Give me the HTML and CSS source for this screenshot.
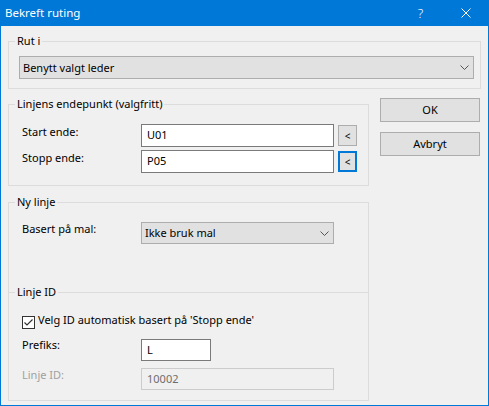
FILE: index.html
```html
<!DOCTYPE html>
<html>
<head>
<meta charset="utf-8">
<title>Bekreft ruting</title>
<link rel="stylesheet" href="styles.css">
</head>
<body>
<div class="window">
  <div class="titlebar">
    <span class="title">Bekreft ruting</span>
    <span class="tbtn help">?</span>
    <span class="tbtn close"><svg width="10" height="10" viewBox="0 0 10 10"><path d="M0.5 0.5L9.5 9.5M9.5 0.5L0.5 9.5" stroke="#fff" stroke-width="1" fill="none"/></svg></span>
  </div>
  <div class="client">
    <div class="group g-rut">
      <div class="group-title">Rut i</div>
      <div class="group-body body-rut">
        <div class="combo combo-wide"><span>Benytt valgt leder</span><svg class="chev" width="9" height="5" viewBox="0 0 9 5"><path d="M0.5 0.5L4.5 4.5L8.5 0.5" stroke="#555" stroke-width="1" fill="none"/></svg></div>
      </div>
    </div>
    <div class="main">
      <div class="left">
        <div class="group g-end">
          <div class="group-title">Linjens endepunkt (valgfritt)</div>
          <div class="group-body body-end">
            <div class="row">
              <span class="lbl">Start ende:</span>
              <div class="input input-mid">U01</div>
              <div class="pick">&lt;</div>
            </div>
            <div class="row row-2">
              <span class="lbl">Stopp ende:</span>
              <div class="input input-mid">P05</div>
              <div class="pick focus">&lt;</div>
            </div>
          </div>
        </div>
        <div class="group g-ny">
          <div class="group-title">Ny linje</div>
          <div class="group-body body-ny">
            <div class="row">
              <span class="lbl">Basert på mal:</span>
              <div class="combo combo-mid"><span>Ikke bruk mal</span><svg class="chev" width="9" height="5" viewBox="0 0 9 5"><path d="M0.5 0.5L4.5 4.5L8.5 0.5" stroke="#555" stroke-width="1" fill="none"/></svg></div>
            </div>
          </div>
        </div>
        <div class="group g-id">
          <div class="group-title">Linje ID</div>
          <div class="group-body body-id">
            <div class="check-row">
              <svg class="checkbox" width="13" height="13" viewBox="0 0 13 13"><rect x="0.5" y="0.5" width="12" height="12" fill="#fff" stroke="#333"/><path d="M2.5 6.5L5 9L10.5 3.5" stroke="#333" stroke-width="1.2" fill="none"/></svg>
              <span>Velg ID automatisk basert på 'Stopp ende'</span>
            </div>
            <div class="row row-prefix">
              <span class="lbl">Prefiks:</span>
              <div class="input input-small">L</div>
            </div>
            <div class="row row-lid">
              <span class="lbl disabled">Linje ID:</span>
              <div class="input input-mid input-disabled">10002</div>
            </div>
          </div>
        </div>
      </div>
      <div class="buttons">
        <div class="btn">OK</div>
        <div class="btn">Avbryt</div>
      </div>
    </div>
  </div>
</div>
</body>
</html>
```
FILE: styles.css
```css
html, body {
  margin: 0;
  padding: 0;
}
body {
  font-family: "Noto Sans", "Open Sans", sans-serif;
  font-size: 11px;
  line-height: 16px;
  color: #000;
  background: #f0f0f0;
}
.window {
  width: 489px;
  height: 406px;
  box-sizing: border-box;
  border: 1px solid #0078d7;
  border-top: none;
  background: #f0f0f0;
  overflow: hidden;
}
.titlebar {
  height: 26px;
  background: #0078d7;
  color: #fff;
  display: flex;
  align-items: center;
}
.title {
  flex: 1;
  padding-left: 4px;
  font-size: 11.5px;
}
.tbtn {
  width: 45px;
  height: 26px;
  display: flex;
  align-items: center;
  justify-content: center;
}
.help {
  font-size: 13px;
  font-weight: 300;
}
.client {
  padding: 0 7px 5px 7px;
}
.group {
  border: 1px solid #dcdcdc;
}
.group-title {
  margin: -9px 0 0 6px;
  padding: 0 2px;
  background: #f0f0f0;
  width: max-content;
}
.g-rut {
  margin-top: 15px;
}
.body-rut {
  padding: 7px 6px 9px 10px;
}
.combo {
  display: flex;
  align-items: center;
  justify-content: space-between;
  box-sizing: border-box;
  border: 1px solid #adadad;
  background: #e1e1e1;
  padding: 0 4px 0 3px;
}
.combo-wide {
  height: 23px;
}
.combo-mid {
  width: 193px;
  height: 22px;
  margin-top: 1px;
}
.main {
  display: flex;
  align-items: flex-start;
  gap: 11px;
  margin-top: 9px;
}
.left {
  width: 361px;
  padding-top: 6px;
}
.buttons {
  width: 100px;
  display: flex;
  flex-direction: column;
  gap: 10px;
}
.btn {
  height: 24px;
  box-sizing: border-box;
  border: 1px solid #adadad;
  background: #e1e1e1;
  display: flex;
  align-items: center;
  justify-content: center;
}
.body-end {
  padding: 12px 0 12px 13px;
}
.row {
  display: flex;
  align-items: flex-start;
}
.row-2 {
  margin-top: 3px;
}
.lbl {
  width: 119px;
  flex: none;
}
.lbl.disabled {
  color: #a0a0a0;
}
.input {
  box-sizing: border-box;
  border: 1px solid #7a7a7a;
  background: #fff;
  padding: 2px 5px 0;
}
.input-mid {
  width: 193px;
  height: 23px;
}
.input-small {
  width: 70px;
  height: 22px;
  margin-top: 2px;
}
.input-disabled {
  height: 22px;
  margin-top: 1px;
  border-color: #cccccc;
  background: #f0f0f0;
  color: #6d6d6d;
}
.pick {
  width: 19px;
  height: 21px;
  margin: 1px 0 0 4px;
  box-sizing: border-box;
  border: 1px solid #adadad;
  background: #e1e1e1;
  display: flex;
  align-items: center;
  justify-content: center;
  font-size: 10px;
}
.pick.focus {
  border: 2px solid #0078d7;
}
.g-ny {
  margin-top: 16px;
  border-bottom: none;
}
.body-ny {
  padding: 11px 0 48px 13px;
}
.body-id {
  padding: 12px 0 10px 13px;
}
.check-row {
  display: flex;
  align-items: flex-start;
}
.checkbox {
  flex: none;
  margin: 4px 3px 0 0;
}
.row-prefix {
  margin-top: 8px;
}
.row-lid {
  margin-top: 6px;
}
```
